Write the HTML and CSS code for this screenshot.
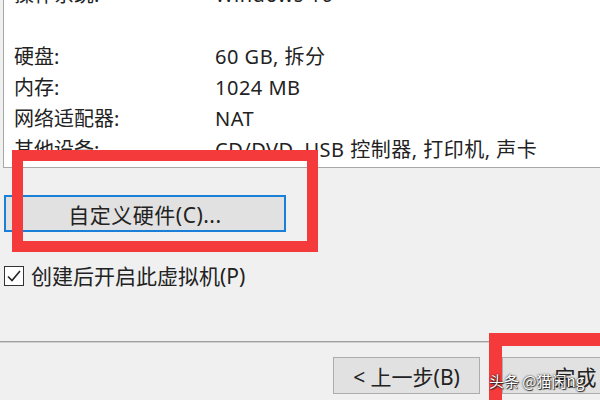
FILE: index.html
```html
<!DOCTYPE html>
<html lang="zh-CN">
<head>
<meta charset="utf-8">
<title>新建虚拟机向导</title>
<link rel="stylesheet" href="styles.css">
</head>
<body>
<div class="dialog">
  <div class="summary">
    <div class="row"><span class="label">操作系统:</span><span class="value">Windows 10</span></div>
    <div class="row"><span class="label"></span><span class="value"></span></div>
    <div class="row"><span class="label">硬盘:</span><span class="value">60 GB, 拆分</span></div>
    <div class="row"><span class="label">内存:</span><span class="value">1024 MB</span></div>
    <div class="row"><span class="label">网络适配器:</span><span class="value">NAT</span></div>
    <div class="row"><span class="label">其他设备:</span><span class="value">CD/DVD, USB 控制器, 打印机, 声卡</span></div>
  </div>
  <div class="custom">
    <button class="btn btn-focus">自定义硬件(C)...</button>
  </div>
  <label class="check">
    <span class="box"><svg viewBox="0 0 18 18" width="18" height="18"><path d="M3 9.5 L7 13.5 L15 4" fill="none" stroke="#222" stroke-width="1.6"/></svg></span>
    <span class="check-text">创建后开启此虚拟机(P)</span>
  </label>
  <div class="separator"></div>
  <div class="footer">
    <button class="btn btn-nav">&lt; 上一步(B)</button>
    <button class="btn btn-nav">完成</button>
  </div>
</div>
<div class="mark mark-custom"></div>
<div class="mark mark-finish"></div>
<div class="watermark">头条 @猫闲ng</div>
</body>
</html>
```

FILE: styles.css
```css
html, body {
  margin: 0;
  padding: 0;
  width: 600px;
  height: 400px;
  overflow: hidden;
  background: #f0f0f0;
}
body {
  position: relative;
  font-family: "Noto Sans", "Noto Sans CJK SC", sans-serif;
  font-size: 20px;
  color: #222;
}
.dialog {
  display: flex;
  flex-direction: column;
}
.summary {
  margin-top: -21px;
  margin-left: 3px;
  background: #fff;
  border-left: 1px solid #a8a8a8;
  border-bottom: 1px solid #a8a8a8;
  padding: 0 0 2px 10px;
}
.row {
  display: flex;
  height: 31px;
  line-height: 31px;
  white-space: nowrap;
}
.label {
  width: 201px;
}
.value {
  letter-spacing: 0.5px;
}
.custom {
  margin-top: 27px;
  padding-left: 4px;
}
.btn {
  font-family: "Noto Sans", "Noto Sans CJK SC", sans-serif;
  font-size: 21px;
  color: #222;
  background: #e1e1e1;
  margin: 0;
  padding: 0;
}
.btn-focus {
  width: 282px;
  height: 37px;
  border: 2px solid #1a7fd8;
  letter-spacing: 0.5px;
}
.check {
  display: flex;
  align-items: center;
  gap: 7px;
  margin-top: 32px;
  padding-left: 4px;
  height: 24px;
}
.box {
  display: flex;
  width: 18px;
  height: 18px;
  border: 1px solid #333;
  background: #fff;
}
.check-text {
  font-size: 21px;
  line-height: 24px;
}
.separator {
  margin-top: 53px;
  height: 1px;
  background: #a0a0a0;
  border-bottom: 1px solid #d0d0d0;
}
.footer {
  display: flex;
  gap: 22px;
  padding-left: 333px;
  margin-top: 14px;
}
.btn-nav {
  flex: none;
  width: 147px;
  height: 37px;
  border: 1px solid #adadad;
}
.mark {
  position: absolute;
  border: 11px solid #f43a3a;
  box-sizing: border-box;
}
.mark-custom {
  left: 12px;
  top: 150px;
  width: 306px;
  height: 102px;
}
.mark-finish {
  left: 489px;
  top: 333px;
  width: 200px;
  height: 200px;
  border-width: 13px;
}
.watermark {
  position: absolute;
  left: 489px;
  top: 372px;
  font-family: "Noto Sans CJK SC", sans-serif;
  font-size: 15px;
  line-height: 18px;
  color: #fff;
  text-shadow: 0 0 2px #000, 1px 1px 1px #333;
}
```
